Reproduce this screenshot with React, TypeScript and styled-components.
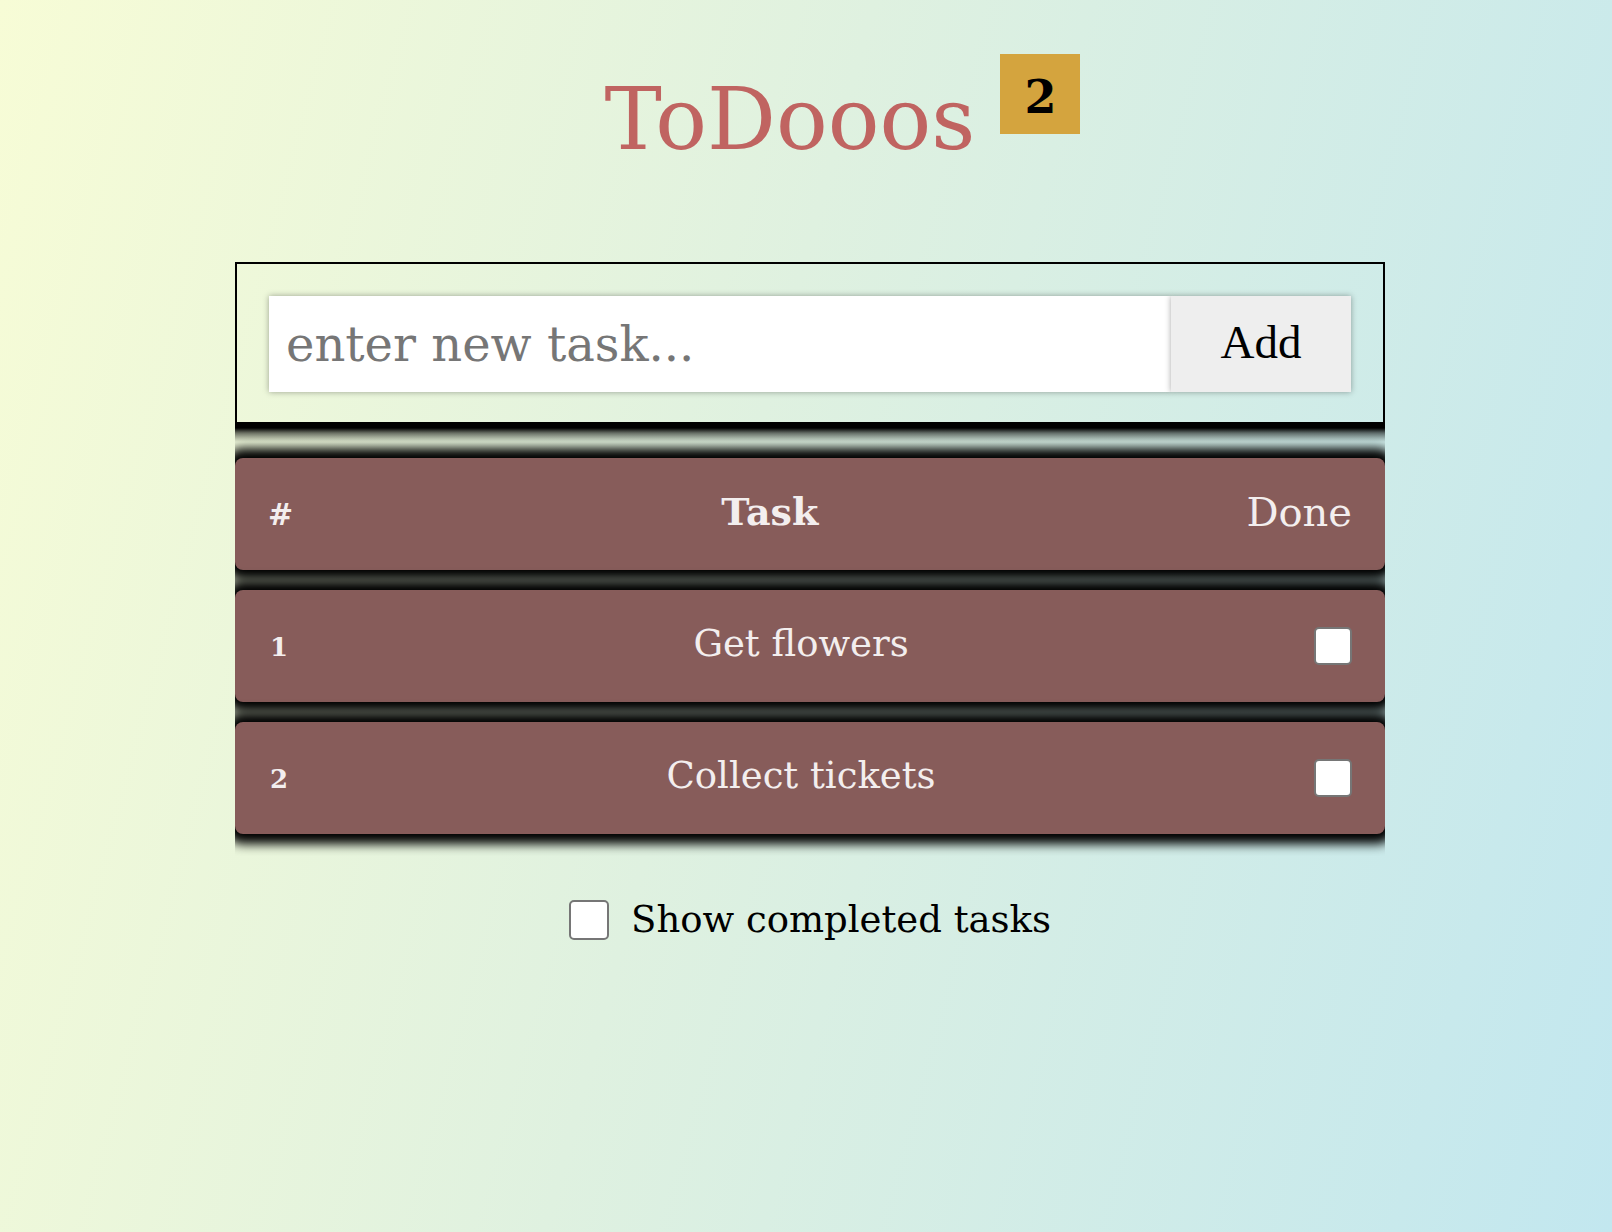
import React, { useState } from "react";
import styled, { createGlobalStyle } from "styled-components";

const GlobalStyle = createGlobalStyle`
  html, body {
    margin: 0;
    padding: 0;
    min-height: 100%;
  }
  body {
    background: linear-gradient(105deg, #f7fcd6 0%, #dff1e0 45%, #c2e7ef 100%);
    font-family: "DejaVu Serif", "Liberation Serif", serif;
    min-height: 1232px;
  }
`;

const Page = styled.div`
  box-sizing: border-box;
  min-height: 1232px;
  padding: 0 0 0 8px;
  display: flex;
  flex-direction: column;
  align-items: center;
`;

const Header = styled.header`
  display: flex;
  align-items: flex-start;
  justify-content: center;
  gap: 25px;
  padding: 54px 0 0 65px;
`;

const Title = styled.h1`
  margin: 22px 0 0;
  font-family: "DejaVu Serif", serif;
  font-weight: 400;
  font-size: 86px;
  line-height: 86px;
  color: #c06461;
`;

const Badge = styled.span`
  width: 80px;
  height: 80px;
  background: #d4a43e;
  color: #000;
  display: flex;
  align-items: center;
  justify-content: center;
  font-family: "DejaVu Serif", serif;
  font-weight: 700;
  font-size: 46px;
  padding-top: 6px;
  box-sizing: border-box;
`;

const Main = styled.main`
  width: 1150px;
  margin-top: 100px;
  display: flex;
  flex-direction: column;
`;

const Form = styled.form`
  display: flex;
  border: 2px solid #000;
  padding: 32px 32px 30px;
  margin: 0;
`;

const Input = styled.input`
  flex: 1;
  height: 96px;
  border: none;
  outline: none;
  background: #fff;
  padding: 0 17px;
  font-family: "DejaVu Serif", serif;
  font-size: 48px;
  color: #222;
  box-shadow: 0 0 6px rgba(0, 0, 0, 0.35);
  &::placeholder {
    color: #767676;
  }
`;

const AddButton = styled.button`
  width: 180px;
  height: 96px;
  border: none;
  background: #eeeeee;
  color: #000;
  font-family: "Liberation Serif", serif;
  font-size: 47px;
  box-shadow: 0 0 6px rgba(0, 0, 0, 0.35);
  cursor: pointer;
  padding: 0 0 4px;
`;

const List = styled.div`
  overflow: hidden;
  display: flex;
  flex-direction: column;
  gap: 20px;
  padding: 34px 0 22px;
  background: linear-gradient(
    to bottom,
    #000 0px,
    #000 4px,
    rgba(0, 0, 0, 0.55) 9px,
    rgba(0, 0, 0, 0) 18px
  );
`;

const Row = styled.div<{ $head?: boolean }>`
  box-sizing: border-box;
  height: 112px;
  display: flex;
  align-items: center;
  padding: 0 33px 5px;
  background: #875c5a;
  border-radius: 8px;
  color: #f3eeee;
  box-shadow: 0 0 11px 10px #000;
  font-size: ${(p) => (p.$head ? "40px" : "37px")};
`;

const NumCell = styled.span<{ $head?: boolean }>`
  font-weight: 700;
  font-size: ${(p) => (p.$head ? "30px" : "26px")};
  min-width: ${(p) => (p.$head ? "20px" : "13px")};
  font-style: ${(p) => (p.$head ? "italic" : "normal")};
  padding: 6px 0 0 ${(p) => (p.$head ? "0" : "2px")};
`;

const TaskCell = styled.span<{ $bold?: boolean }>`
  flex: 1;
  text-align: center;
  font-weight: ${(p) => (p.$bold ? 700 : 400)};
  font-size: ${(p) => (p.$bold ? "38px" : "inherit")};
`;

const DoneCell = styled.span`
  font-weight: 400;
`;

const Box = styled.span<{ $size: number }>`
  display: inline-block;
  box-sizing: border-box;
  width: ${(p) => p.$size}px;
  height: ${(p) => p.$size}px;
  background: #fff;
  border: 2px solid #767676;
  border-radius: 5px;
  flex: none;
`;

const RowBox = styled(Box)`
  margin-top: 4px;
`;

const Footer = styled.label`
  margin-top: 44px;
  display: flex;
  align-items: center;
  justify-content: center;
  gap: 22px;
  font-family: "DejaVu Serif", serif;
  font-size: 37px;
  line-height: 40px;
  color: #000;
`;

const tasks = ["Get flowers", "Collect tickets"];

export default function App() {
  const [value, setValue] = useState("");
  return (
    <>
      <GlobalStyle />
      <Page>
        <Header>
          <Title>ToDooos</Title>
          <Badge>2</Badge>
        </Header>
        <Main>
          <Form onSubmit={(e) => e.preventDefault()}>
            <Input
              placeholder="enter new task..."
              value={value}
              onChange={(e) => setValue(e.target.value)}
            />
            <AddButton type="submit">Add</AddButton>
          </Form>
          <List>
            <Row $head>
              <NumCell $head>#</NumCell>
              <TaskCell $bold>Task</TaskCell>
              <DoneCell>Done</DoneCell>
            </Row>
            {tasks.map((t, i) => (
              <Row key={t}>
                <NumCell>{i + 1}</NumCell>
                <TaskCell>{t}</TaskCell>
                <RowBox $size={38} />
              </Row>
            ))}
          </List>
          <Footer>
            <Box $size={40} />
            <span>Show completed tasks</span>
          </Footer>
        </Main>
      </Page>
    </>
  );
}
